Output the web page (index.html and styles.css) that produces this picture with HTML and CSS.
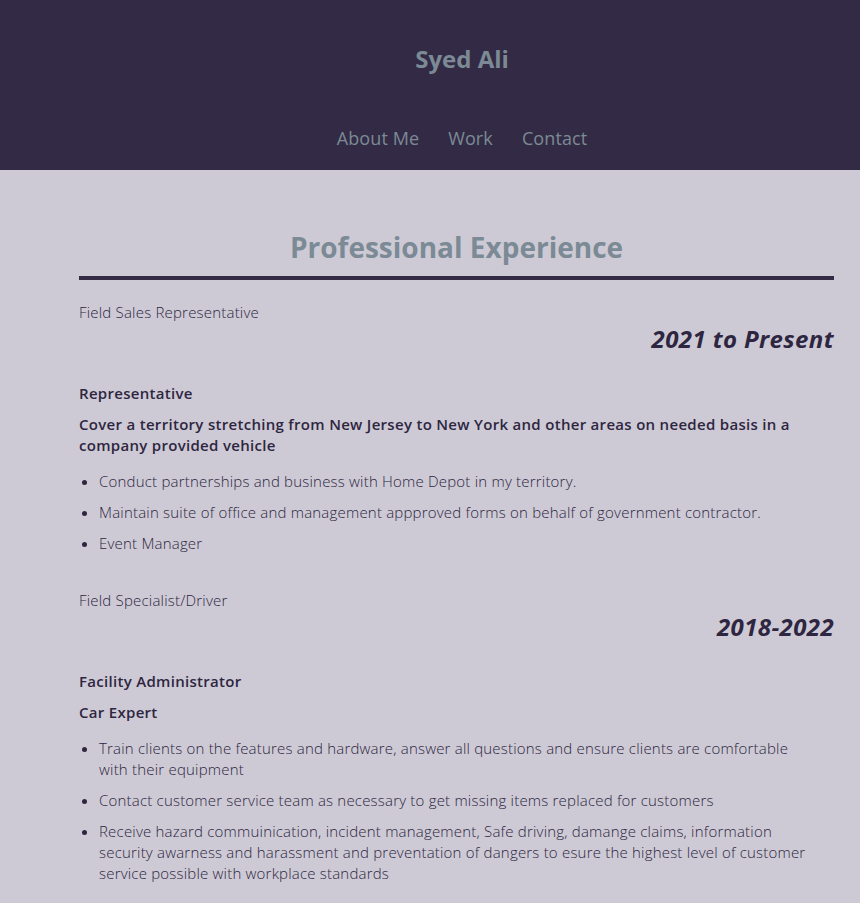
FILE: index.html
```html
<!DOCTYPE html>
<html lang="en">
<head>
<meta charset="utf-8">
<title>Syed Ali</title>
<link rel="stylesheet" href="styles.css">
</head>
<body>
<header class="site-header">
  <h1 class="site-title">Syed Ali</h1>
  <nav class="site-nav">
    <a href="#" class="nav-link">About Me</a>
    <a href="#" class="nav-link">Work</a>
    <a href="#" class="nav-link">Contact</a>
  </nav>
</header>
<main class="content">
  <h2 class="section-title">Professional Experience</h2>
  <section class="job">
    <p class="job-title">Field Sales Representative</p>
    <p class="job-dates">2021 to Present</p>
    <p class="job-role">Representative</p>
    <p class="job-summary">Cover a territory stretching from New Jersey to New York and other areas on needed basis in a company provided vehicle</p>
    <ul class="job-list">
      <li>Conduct partnerships and business with Home Depot in my territory.</li>
      <li>Maintain suite of office and management appproved forms on behalf of government contractor.</li>
      <li>Event Manager</li>
    </ul>
  </section>
  <section class="job">
    <p class="job-title">Field Specialist/Driver</p>
    <p class="job-dates">2018-2022</p>
    <p class="job-role">Facility Administrator</p>
    <p class="job-summary">Car Expert</p>
    <ul class="job-list">
      <li>Train clients on the features and hardware, answer all questions and ensure clients are comfortable with their equipment</li>
      <li>Contact customer service team as necessary to get missing items replaced for customers</li>
      <li>Receive hazard commuinication, incident management, Safe driving, damange claims, information security awarness and harassment and preventation of dangers to esure the highest level of customer service possible with workplace standards</li>
    </ul>
  </section>
</main>
</body>
</html>
```

FILE: styles.css
```css
html, body {
  margin: 0;
  padding: 0;
}
body {
  background: #cdcad6;
  color: #2e2640;
  font-family: "Open Sans", "Noto Sans", sans-serif;
  font-weight: 300;
  font-size: 15px;
  line-height: 21px;
  letter-spacing: 0.2px;
}
.site-header {
  background: #332a45;
  height: 170px;
  box-sizing: border-box;
  padding: 43px 0 0 64px;
  display: flex;
  flex-direction: column;
  align-items: center;
}
.site-title {
  margin: 0;
  font-size: 24px;
  line-height: 32px;
  font-weight: 700;
  letter-spacing: 0;
  color: #7b8a94;
}
.site-nav {
  margin-top: 51px;
  display: flex;
  gap: 29px;
}
.nav-link {
  color: #7b8a94;
  text-decoration: none;
  font-size: 18px;
  line-height: 24px;
  font-weight: 400;
  letter-spacing: 0.1px;
}
.content {
  padding: 0 26px 20px 79px;
}
.section-title {
  margin: 0;
  padding-top: 57px;
  padding-bottom: 9px;
  border-bottom: 4px solid #332a45;
  text-align: center;
  font-size: 28px;
  line-height: 40px;
  font-weight: 700;
  letter-spacing: 0;
  color: #7b8a94;
}
.job p {
  margin: 0;
}
.job-title {
  margin-top: 22px !important;
}
.job-dates {
  text-align: right;
  font-size: 24px;
  line-height: 31px;
  font-weight: 700;
  font-style: italic;
  letter-spacing: 0.4px;
  margin-top: 0 !important;
}
.job-role {
  margin-top: 29px !important;
  font-weight: 600;
  letter-spacing: 0.3px;
}
.job-summary {
  margin-top: 10px !important;
  font-weight: 600;
  letter-spacing: 0.3px;
}
.job-list {
  margin: 15px 0 0;
  padding: 0 22px 0 20px;
}
.job-list li {
  margin-bottom: 10px;
}
.job + .job .job-title {
  margin-top: 36px !important;
}
```
